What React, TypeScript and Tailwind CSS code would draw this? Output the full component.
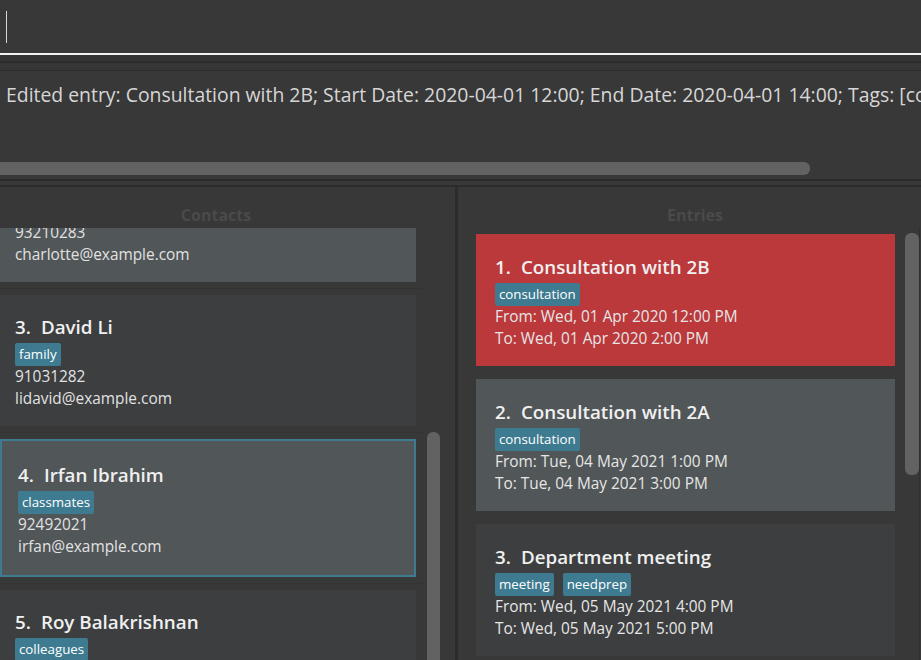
import React from "react";

type Person = { id: number; name: string; tags: string[]; phone: string; email: string };
type Entry = { id: number; title: string; tags: string[]; from: string; to: string };

const people: Person[] = [
  { id: 2, name: "Charlotte Oliveiro", tags: ["neighbours"], phone: "93210283", email: "charlotte@example.com" },
  { id: 3, name: "David Li", tags: ["family"], phone: "91031282", email: "lidavid@example.com" },
  { id: 4, name: "Irfan Ibrahim", tags: ["classmates"], phone: "92492021", email: "irfan@example.com" },
  { id: 5, name: "Roy Balakrishnan", tags: ["colleagues"], phone: "92624417", email: "royb@example.com" },
];

const entries: Entry[] = [
  { id: 1, title: "Consultation with 2B", tags: ["consultation"], from: "Wed, 01 Apr 2020 12:00 PM", to: "Wed, 01 Apr 2020 2:00 PM" },
  { id: 2, title: "Consultation with 2A", tags: ["consultation"], from: "Tue, 04 May 2021 1:00 PM", to: "Tue, 04 May 2021 3:00 PM" },
  { id: 3, title: "Department meeting", tags: ["meeting", "needprep"], from: "Wed, 05 May 2021 4:00 PM", to: "Wed, 05 May 2021 5:00 PM" },
  { id: 4, title: "Project review", tags: ["meeting"], from: "Thu, 06 May 2021 10:00 AM", to: "Thu, 06 May 2021 11:00 AM" },
];

function Tags({ tags }: { tags: string[] }) {
  return (
    <div className="flex gap-[9px] mt-[3px]">
      {tags.map((t) => (
        <span
          key={t}
          className="h-[23px] px-[4px] flex items-center rounded-[2px] bg-[#3e7b91] text-white text-[13.3px] leading-none"
        >
          {t}
        </span>
      ))}
    </div>
  );
}

function Title({ id, text }: { id: number; text: string }) {
  return (
    <div className="flex h-[26px] items-center text-[18.8px] font-semibold text-[#f0f0f0] leading-none">
      <span>{id}.</span>
      <span className="ml-[10px]">{text}</span>
    </div>
  );
}

function ContactCard({ p }: { p: Person }) {
  const selected = p.id === 4;
  const bg = p.id % 2 === 0 ? "bg-[#515658]" : "bg-[#3c3e3f]";
  return (
    <div className="pt-[6px] pb-[6px] pr-[7px] border-b border-[#333333]">
      {selected ? (
        <div className={`${bg} border-2 border-[#3e7b91] pt-[21px] pb-[17px] pl-[16px]`}>
          <Title id={p.id} text={p.name} />
          <Tags tags={p.tags} />
          <div className="text-[15.4px] leading-[22px] text-[#e2e2e2]">{p.phone}</div>
          <div className="text-[15.4px] leading-[22px] text-[#e2e2e2]">{p.email}</div>
        </div>
      ) : (
        <div className={`${bg} pt-[19px] pb-[16px] pl-[15px]`}>
          <Title id={p.id} text={p.name} />
          <Tags tags={p.tags} />
          <div className="text-[15.4px] leading-[22px] text-[#e2e2e2]">{p.phone}</div>
          <div className="text-[15.4px] leading-[22px] text-[#e2e2e2]">{p.email}</div>
        </div>
      )}
    </div>
  );
}

function EntryCard({ e }: { e: Entry }) {
  const bg = e.id === 1 ? "bg-[#bb383b]" : e.id % 2 === 0 ? "bg-[#515658]" : "bg-[#3c3e3f]";
  return (
    <div className="pt-[6px] pb-[7px] pr-[7px]">
      <div className={`${bg} pt-[20px] pb-[16px] pl-[19px]`}>
        <Title id={e.id} text={e.title} />
        <Tags tags={e.tags} />
        <div className="text-[15.4px] leading-[22px] text-[#e6e6e6]">From: {e.from}</div>
        <div className="text-[15.4px] leading-[22px] text-[#e6e6e6]">To: {e.to}</div>
      </div>
    </div>
  );
}

export default function App() {
  return (
    <div
      className="w-[921px] h-[660px] overflow-hidden bg-[#383838] flex flex-col"
      style={{ fontFamily: '"Open Sans", "Noto Sans", sans-serif' }}
    >
      {/* Command box */}
      <div className="h-[53px] shrink-0 bg-[#383838] flex items-center pl-[6px]">
        <div className="w-[1px] h-[32px] bg-[#d8d8d8]" />
      </div>
      <div className="h-[2px] shrink-0 bg-[#f2f2f2]" />
      <div className="h-[6px] shrink-0 bg-[#343434]" />
      <div className="h-[2px] shrink-0 bg-[#2d2d2d]" />
      <div className="h-[7px] shrink-0 bg-[#363636]" />
      <div className="h-[1px] shrink-0 bg-[#2c2c2c]" />

      {/* Result display */}
      <div className="h-[108px] shrink-0 bg-[#383838] flex flex-col overflow-hidden">
        <div className="pl-[6px] pt-[12px] h-[91px] whitespace-nowrap text-[19.4px] leading-[24px] text-[#d6d6d6]">
          Edited entry: Consultation with 2B; Start Date: 2020-04-01 12:00; End Date: 2020-04-01 14:00; Tags: [consultation]
        </div>
        <div className="h-[13px] w-[810px] rounded-r-[6px] bg-[#626262]" />
      </div>
      <div className="h-[2px] shrink-0 bg-[#2b2b2b]" />
      <div className="h-[4px] shrink-0 bg-[#383838]" />
      <div className="h-[2px] shrink-0 bg-[#2b2b2b]" />

      {/* Panes */}
      <div className="flex-1 flex min-h-0">
        {/* Contacts */}
        <div className="w-[455px] shrink-0 flex flex-col">
          <div className="h-[41px] w-[432px] shrink-0 flex items-end justify-center pb-[2px] text-[16px] font-bold leading-[22px] text-[#4a4a4a]">
            Contacts
          </div>
          <div className="flex-1 flex min-h-0">
            <div className="w-[423px] overflow-hidden">
              <div className="-mt-[83px]">
                {people.map((p) => (
                  <ContactCard key={p.id} p={p} />
                ))}
              </div>
            </div>
            <div className="ml-[4px] w-[13px] pt-[204px]">
              <div className="h-[300px] rounded-[6px] bg-[#626262]" />
            </div>
          </div>
        </div>
        <div className="w-[3px] shrink-0 bg-[#2b2b2b]" />

        {/* Entries */}
        <div className="flex-1 flex flex-col">
          <div className="h-[41px] shrink-0 flex items-end justify-center pl-[18px] pr-[7px] pb-[2px] text-[16px] font-bold leading-[22px] text-[#4a4a4a]">
            Entries
          </div>
          <div className="flex-1 flex min-h-0">
            <div className="ml-[18px] w-[426px] overflow-hidden">
              {entries.map((e) => (
                <EntryCard key={e.id} e={e} />
              ))}
            </div>
            <div className="ml-[3px] w-[14px] pt-[5px]">
              <div className="h-[242px] rounded-[6px] bg-[#626262]" />
            </div>
            <div className="w-[1px] bg-[#2f2f2f]" />
          </div>
        </div>
      </div>
    </div>
  );
}
